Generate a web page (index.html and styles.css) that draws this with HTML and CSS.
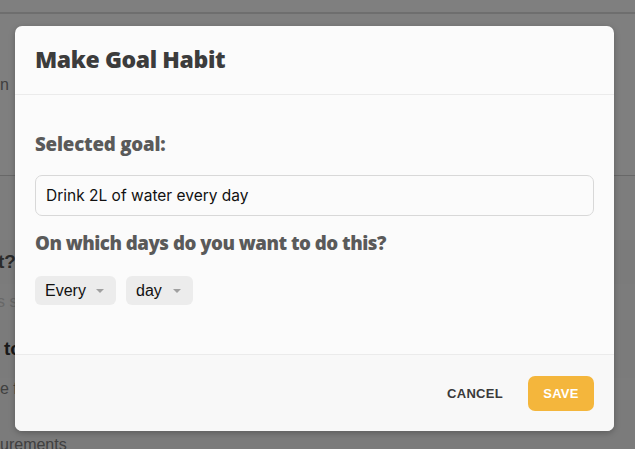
FILE: index.html
```html
<!DOCTYPE html>
<html>
<head>
<meta charset="utf-8">
<link rel="stylesheet" href="styles.css">
</head>
<body>
<div class="page">
  <div class="topbar"></div>
  <div class="row r1"><span class="txt-muted">n</span></div>
  <div class="band b1"></div>
  <div class="band b2"><span class="txt-bold">t?</span></div>
  <div class="band b3"><span class="txt-light">s sp</span></div>
  <div class="band b4"><span class="txt-bold dark">to</span></div>
  <div class="band b5"><span class="txt-muted">e f</span></div>
  <div class="band b6"><span class="txt-muted">urements</span></div>
</div>
<div class="overlay"></div>
<div class="dialog">
  <div class="dialog-header">
    <h1 class="title">Make Goal Habit</h1>
  </div>
  <div class="dialog-body">
    <div class="label">Selected goal:</div>
    <div class="input">Drink 2L of water every day</div>
    <div class="label label-days">On which days do you want to do this?</div>
    <div class="chips">
      <div class="chip chip-every"><span>Every</span><span class="caret"></span></div>
      <div class="chip chip-day"><span>day</span><span class="caret"></span></div>
    </div>
  </div>
  <div class="dialog-footer">
    <button class="btn btn-cancel">CANCEL</button>
    <button class="btn btn-save">SAVE</button>
  </div>
</div>
</body>
</html>
```
FILE: styles.css
```css
html, body {
  margin: 0;
  padding: 0;
  width: 635px;
  height: 449px;
  overflow: hidden;
  background: #ffffff;
  font-family: "Open Sans", "Inter", sans-serif;
}
.page {
  display: flex;
  flex-direction: column;
  width: 635px;
  height: 449px;
  background: #ffffff;
}
.topbar {
  height: 14px;
  border-bottom: 2px solid #dcdcdc;
  box-sizing: border-box;
  flex: none;
}
.row, .band {
  display: flex;
  align-items: center;
  flex: none;
  box-sizing: border-box;
  font-family: "Liberation Sans", sans-serif;
  font-size: 16px;
  line-height: 18px;
  overflow: hidden;
}
.r1 { height: 162px; align-items: flex-start; padding-top: 62px; border-bottom: 1px solid #d0d0d0; }
.b1 { height: 64px; background: #fbfbfb; }
.b2 { height: 44px; background: #f6f6f6; }
.b3 { height: 36px; background: #f9f9f9; }
.b4 { height: 58px; background: #f6f6f6; }
.b5 { height: 22px; background: #f8f8f8; }
.b6 { height: 49px; background: #f6f6f6; align-items: flex-start; padding-top: 36px; }
.txt-muted { color: #808080; }
.txt-bold { color: #555555; font-weight: 700; font-size: 19px; margin-left: -2px; }
.txt-bold.dark { color: #333333; margin-left: 4px; }
.txt-light { color: #d0d0d0; margin-left: -3px; }
.overlay {
  position: absolute;
  left: 0;
  top: 0;
  width: 635px;
  height: 449px;
  background: rgba(0, 0, 0, 0.5);
}
.dialog {
  position: absolute;
  left: 15px;
  top: 26px;
  width: 599px;
  height: 405px;
  background: #fbfbfb;
  border-radius: 7px;
  box-shadow: 0 2px 6px rgba(0, 0, 0, 0.25);
  display: flex;
  flex-direction: column;
  overflow: hidden;
}
.dialog-header {
  height: 69px;
  box-sizing: border-box;
  border-bottom: 1px solid #ebebeb;
  padding: 0 20px 3px 20px;
  display: flex;
  align-items: center;
  flex: none;
}
.title {
  margin: 0;
  font-size: 23px;
  font-weight: 800;
  color: #3c3c3c;
  letter-spacing: -0.4px;
}
.dialog-body {
  padding: 37px 20px 0 20px;
  height: 260px;
  box-sizing: border-box;
  border-bottom: 1px solid #ebebeb;
  flex: none;
}
.label {
  font-size: 18.7px;
  font-weight: 800;
  color: #5a5a5a;
  line-height: 24px;
  height: 24px;
  letter-spacing: -0.2px;
}
.input {
  margin-top: 19px;
  height: 41px;
  box-sizing: border-box;
  border: 1px solid #d8d8d8;
  border-radius: 7px;
  padding: 0 10px;
  display: flex;
  align-items: center;
  font-family: "Inter", sans-serif;
  font-size: 15.5px;
  color: #111111;
  background: #fbfbfb;
}
.label-days {
  margin-top: 15px;
  letter-spacing: -0.5px;
}
.chips {
  display: flex;
  gap: 10px;
  margin-top: 21px;
}
.chip {
  height: 29px;
  box-sizing: border-box;
  background: #ececec;
  border-radius: 6px;
  display: flex;
  align-items: center;
  font-family: "Liberation Sans", sans-serif;
  font-size: 16px;
  color: #111111;
}
.chip-every { width: 81px; padding-left: 10px; }
.chip-day { width: 67px; padding-left: 10px; }
.chip-every .caret { margin-left: 10px; }
.chip-day .caret { margin-left: 11px; }
.caret {
  width: 0;
  height: 0;
  border-left: 4px solid transparent;
  border-right: 4px solid transparent;
  border-top: 4px solid #a0a0a0;
}
.dialog-footer {
  flex: 1;
  background: #f8f8f8;
  display: flex;
  align-items: center;
  justify-content: flex-end;
  padding: 0 20px;
  gap: 13px;
}
.btn {
  border: none;
  height: 35px;
  font-family: "Liberation Sans", sans-serif;
  font-weight: 700;
  font-size: 13px;
  letter-spacing: 0.3px;
  border-radius: 7px;
  cursor: pointer;
}
.btn-cancel {
  background: transparent;
  color: #3a3a3a;
  padding: 0 12px;
}
.btn-save {
  background: #f4b63c;
  color: #ffffff;
  width: 66px;
  padding: 0;
}
```
